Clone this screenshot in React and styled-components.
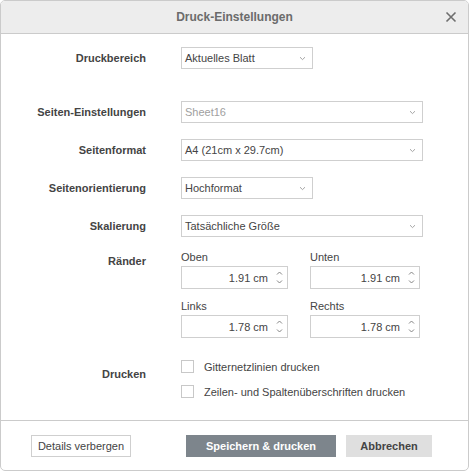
import React from 'react';
import styled, { createGlobalStyle } from 'styled-components';

const Global = createGlobalStyle`
  html, body { margin: 0; padding: 0; background: #fff; }
  body { font-family: "Liberation Sans", Arial, sans-serif; font-size: 11px; color: #444; }
`;

const Dialog = styled.div`
  box-sizing: border-box;
  width: 469px;
  height: 471px;
  border: 1px solid #cbcbcb;
  border-radius: 5px;
  overflow: hidden;
  display: flex;
  flex-direction: column;
  background: #fff;
`;

const Header = styled.div`
  height: 32px;
  flex: none;
  background: #ededed;
  border-bottom: 1px solid #cbcbcb;
  display: flex;
  align-items: center;
  justify-content: center;
  position: relative;
  font-size: 12px;
  font-weight: bold;
  color: #6b6b6b;
`;

const Close = styled.div`
  position: absolute;
  right: 11px;
  top: 10px;
  width: 12px;
  height: 12px;
`;

const Body = styled.div`
  flex: 1;
  padding-top: 13px;
  display: flex;
  flex-direction: column;
`;

const Row = styled.div`
  display: grid;
  grid-template-columns: 145px 1fr;
  column-gap: 35px;
  align-items: ${p => p.$top ? 'start' : 'center'};
  margin-bottom: ${p => p.$gap ?? 16}px;
`;

const Label = styled.div`
  text-align: right;
  font-weight: bold;
  font-size: 11px;
  color: #444;
  padding-top: ${p => p.$pt ?? 0}px;
`;

const Select = styled.div`
  box-sizing: border-box;
  width: ${p => p.$w}px;
  height: 22px;
  border: 1px solid #cfcfcf;
  display: flex;
  align-items: center;
  justify-content: space-between;
  padding: 0 6px 0 3px;
  font-size: 11px;
  color: ${p => p.$disabled ? '#a0a0a0' : '#444'};
`;

const Caret = () => (
  <svg width="7" height="5" viewBox="0 0 7 5">
    <path d="M1 1.2 L3.5 3.6 L6 1.2" fill="none" stroke="#9a9a9a" strokeWidth="0.9" />
  </svg>
);

const MarginGrid = styled.div`
  display: grid;
  grid-template-columns: 129px 110px;
  row-gap: 11px;
`;

const Field = styled.div`
  display: flex;
  flex-direction: column;
  gap: 3px;
  font-size: 11px;
  color: #444;
`;

const Spin = styled.div`
  box-sizing: border-box;
  width: ${p => p.$w}px;
  height: 23px;
  border: 1px solid #cfcfcf;
  display: flex;
  align-items: center;
  justify-content: flex-end;
  padding-right: 4px;
  gap: 8px;
  color: #444;
`;

const Arrows = () => (
  <svg width="7" height="15" viewBox="0 0 7 15">
    <path d="M1 4.5 L3.5 2 L6 4.5" fill="none" stroke="#777" strokeWidth="0.9" />
    <path d="M1 10.5 L3.5 13 L6 10.5" fill="none" stroke="#777" strokeWidth="0.9" />
  </svg>
);

const Checks = styled.div`
  display: flex;
  flex-direction: column;
  gap: 12px;
`;

const Check = styled.label`
  display: flex;
  align-items: center;
  gap: 10px;
  font-size: 11px;
  color: #444;
`;

const Box = styled.span`
  box-sizing: border-box;
  width: 13px;
  height: 13px;
  border: 1px solid #c8c8c8;
  display: inline-block;
`;

const Footer = styled.div`
  height: 48px;
  flex: none;
  border-top: 1px solid #cbcbcb;
  display: flex;
  align-items: center;
  padding: 1px 0 0 30px;
`;

const Button = styled.div`
  box-sizing: border-box;
  height: 22px;
  width: ${p => p.$w}px;
  margin-left: ${p => p.$ml ?? 0}px;
  display: flex;
  align-items: center;
  justify-content: center;
  font-size: 11px;
  font-weight: ${p => p.$bold ? 'bold' : 'normal'};
  color: ${p => p.$primary ? '#fff' : '#444'};
  background: ${p => p.$primary ? '#7d858c' : p.$grey ? '#dfdfdf' : '#fff'};
  border: ${p => p.$outline ? '1px solid #cfcfcf' : 'none'};
`;

export default function App() {
  return (
    <>
      <Global />
      <Dialog>
        <Header>
          Druck-Einstellungen
          <Close>
            <svg width="12" height="12" viewBox="0 0 12 12">
              <path d="M1.5 1.5 L10.5 10.5 M10.5 1.5 L1.5 10.5" stroke="#6e6e6e" strokeWidth="1.6" />
            </svg>
          </Close>
        </Header>
        <Body>
          <Row $gap={32}>
            <Label>Druckbereich</Label>
            <Select $w={132}>Aktuelles Blatt<Caret /></Select>
          </Row>
          <Row>
            <Label>Seiten-Einstellungen</Label>
            <Select $w={242} $disabled>Sheet16<Caret /></Select>
          </Row>
          <Row>
            <Label>Seitenformat</Label>
            <Select $w={242}>A4 (21cm x 29.7cm)<Caret /></Select>
          </Row>
          <Row>
            <Label>Seitenorientierung</Label>
            <Select $w={132}>Hochformat<Caret /></Select>
          </Row>
          <Row $gap={14}>
            <Label>Skalierung</Label>
            <Select $w={242}>Tatsächliche Größe<Caret /></Select>
          </Row>
          <Row $top $gap={22}>
            <Label $pt={4}>Ränder</Label>
            <MarginGrid>
              <Field>Oben<Spin $w={107}>1.91 cm<Arrows /></Spin></Field>
              <Field>Unten<Spin $w={110}>1.91 cm<Arrows /></Spin></Field>
              <Field>Links<Spin $w={107}>1.78 cm<Arrows /></Spin></Field>
              <Field>Rechts<Spin $w={110}>1.78 cm<Arrows /></Spin></Field>
            </MarginGrid>
          </Row>
          <Row $top>
            <Label $pt={8}>Drucken</Label>
            <Checks>
              <Check><Box />Gitternetzlinien drucken</Check>
              <Check><Box />Zeilen- und Spaltenüberschriften drucken</Check>
            </Checks>
          </Row>
        </Body>
        <Footer>
          <Button $w={100} $outline>Details verbergen</Button>
          <Button $w={150} $ml={55} $primary $bold>Speichern &amp; drucken</Button>
          <Button $w={86} $ml={10} $grey $bold>Abbrechen</Button>
        </Footer>
      </Dialog>
    </>
  );
}
